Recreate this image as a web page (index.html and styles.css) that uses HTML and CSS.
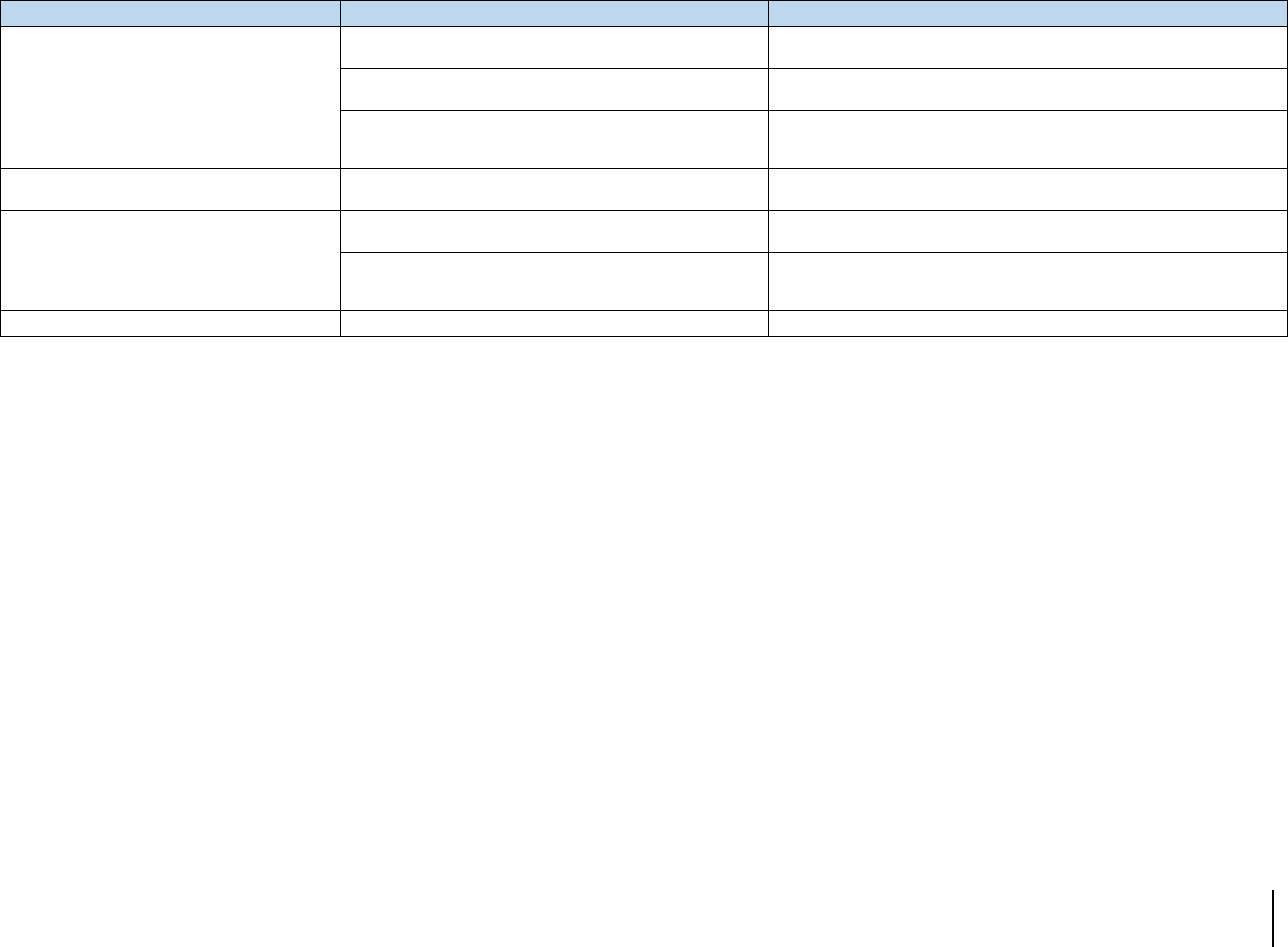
FILE: index.html
```html
<!DOCTYPE html>
<html lang="en">
<head>
    <meta charset="UTF-8">
    <title>Table</title>
    <link rel="stylesheet" href="styles.css">
</head>
<body>
    <div class="page">
        <table class="grid">
            <colgroup>
                <col class="col-a">
                <col class="col-b">
                <col class="col-c">
            </colgroup>
            <thead>
                <tr class="head">
                    <th></th>
                    <th></th>
                    <th></th>
                </tr>
            </thead>
            <tbody>
                <tr class="row">
                    <td rowspan="3"></td>
                    <td></td>
                    <td></td>
                </tr>
                <tr class="row">
                    <td></td>
                    <td></td>
                </tr>
                <tr class="row tall">
                    <td></td>
                    <td></td>
                </tr>
                <tr class="row">
                    <td></td>
                    <td></td>
                    <td></td>
                </tr>
                <tr class="row">
                    <td rowspan="2"></td>
                    <td></td>
                    <td></td>
                </tr>
                <tr class="row tall">
                    <td></td>
                    <td></td>
                </tr>
                <tr class="row short">
                    <td></td>
                    <td></td>
                    <td></td>
                </tr>
            </tbody>
        </table>

        <!-- page edge marker -->
        <div class="page-foot">
            <span class="mark"></span>
        </div>
    </div>
</body>
</html>
```

FILE: styles.css
```css
html, body {
    margin: 0;
    padding: 0;
    background: #fff;
}
body {
    font-family: "Liberation Sans", Arial, sans-serif;
    font-size: 13px;
    color: #000;
}
.page {
    display: flex;
    flex-direction: column;
    height: 947px;
    width: 1288px;
}
.grid {
    border-collapse: collapse;
    table-layout: fixed;
    width: 1287px;
}
.col-a {
    width: 340px;
}
.col-b {
    width: 428px;
}
.col-c {
    width: 519px;
}
.grid th,
.grid td {
    border: 1px solid #000;
    padding: 0;
}
.head th {
    background-color: #bdd7ee;
    height: 25px;
}
.row td {
    height: 41px;
}
.row.tall td {
    height: 57px;
}
.row.short td {
    height: 25px;
}
.page-foot {
    margin-top: auto;
    display: flex;
    justify-content: flex-end;
    padding-right: 14px;
}
.mark {
    display: block;
    width: 2px;
    height: 57px;
    background: #000;
}
```
